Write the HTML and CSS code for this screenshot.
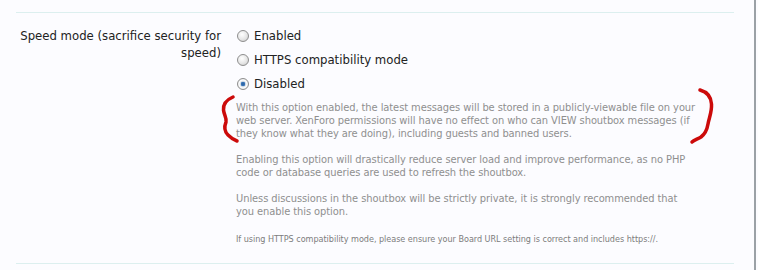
FILE: index.html
```html
<!DOCTYPE html>
<html>
<head>
<meta charset="utf-8">
<link rel="stylesheet" href="styles.css">
</head>
<body>
<div class="page">
  <div class="option-row">
    <div class="label">Speed mode (sacrifice security for speed)</div>
    <div class="value">
      <ul class="choices">
        <li><label><input type="radio" name="speed"> Enabled</label></li>
        <li><label><input type="radio" name="speed"> HTTPS compatibility mode</label></li>
        <li><label><input type="radio" name="speed" checked> Disabled</label></li>
      </ul>
      <div class="explain">
        <p>With this option enabled, the latest messages will be stored in a publicly-viewable file on your<br>web server. XenForo permissions will have no effect on who can VIEW shoutbox messages (if<br>they know what they are doing), including guests and banned users.</p>
        <p>Enabling this option will drastically reduce server load and improve performance, as no PHP<br>code or database queries are used to refresh the shoutbox.</p>
        <p>Unless discussions in the shoutbox will be strictly private, it is strongly recommended that<br>you enable this option.</p>
        <p class="small">If using HTTPS compatibility mode, please ensure your Board URL setting is correct and includes https://.</p>
      </div>
    </div>
  </div>
  <svg class="marks" width="758" height="270" viewBox="0 0 758 270">
    <path d="M233 97 C226 100 223 104 223.5 110 C224 115 227 118 226 122 C224 127 224 131 228 135 C231 138 234 140 237 141" />
    <path d="M700 90 C707 92 711 96 711.5 104 C712 112 709 118 708 124 C707 130 705 134 701 137 C698 139 694 140 692 142" />
  </svg>
</div>
</body>
</html>
```
FILE: styles.css
```css
html, body {
  margin: 0;
  padding: 0;
}
body {
  background: #fcfcff;
  font-family: "DejaVu Sans Condensed", "DejaVu Sans", Verdana, sans-serif;
  color: #222;
}
.page {
  position: relative;
  width: 756px;
  height: 270px;
  border-right: 2px solid #9ba1a6;
  padding-top: 12px;
  box-sizing: border-box;
}
.option-row {
  margin: 0 20px 0 16px;
  border-top: 1px solid #dcefef;
  border-bottom: 1px solid #dcefef;
  display: grid;
  grid-template-columns: 205px 1fr;
  column-gap: 15px;
  padding: 13px 0 17px;
}
.label {
  text-align: right;
  font-size: 13px;
  line-height: 17px;
  color: #222;
  padding-top: 1px;
}
.choices {
  list-style: none;
  margin: 0;
  padding: 0;
}
.choices li {
  height: 24px;
  line-height: 20px;
  font-size: 13px;
}
.choices label {
  display: flex;
  align-items: center;
  gap: 5px;
}
.choices input {
  appearance: none;
  -webkit-appearance: none;
  width: 12px;
  height: 12px;
  margin: 0 0 0 1px;
  border-radius: 50%;
  border: 1px solid #8e8e8e;
  background: radial-gradient(circle at 40% 35%, #ffffff 0%, #e6e6e6 55%, #c4c4c4 100%);
  box-sizing: border-box;
  position: relative;
}
.choices input:checked {
  background: radial-gradient(circle at 50% 50%, #2d5f9a 0%, #3a78bd 28%, #cfd9e4 36%, #ffffff 55%, #c8c8c8 100%);
}
.explain {
  margin-top: 3px;
  color: #8f8f8f;
  font-size: 11px;
  line-height: 13px;
  letter-spacing: -0.07px;
}
.explain p {
  margin: 0 0 13px;
  white-space: nowrap;
}
.explain p.small {
  margin: 15px 0 0;
  font-size: 9px;
  color: #7d7d7d;
  letter-spacing: -0.03px;
}
.marks {
  position: absolute;
  left: 0;
  top: 0;
  pointer-events: none;
}
.marks path {
  fill: none;
  stroke: #cc0a0a;
  stroke-width: 3.5;
  stroke-linecap: round;
  stroke-linejoin: round;
}
```
